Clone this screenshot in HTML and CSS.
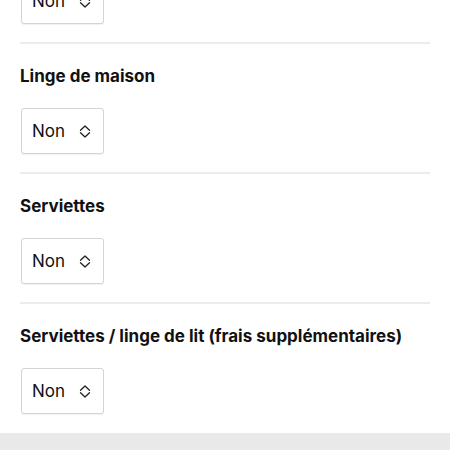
FILE: index.html
```html
<!DOCTYPE html>
<html lang="fr">
<head>
<meta charset="utf-8">
<link rel="stylesheet" href="styles.css">
</head>
<body>
<div class="page">
  <main class="content">
    <section class="field first">
      <div class="select">
        <span class="value">Non</span>
        <svg class="chev" viewBox="0 0 12 13" width="12" height="13"><path d="M1.5 5.3 L6 1 L10.5 5.3 M1.5 7.7 L6 12 L10.5 7.7" fill="none" stroke="#222" stroke-width="1.3" stroke-linecap="round" stroke-linejoin="round"/></svg>
      </div>
    </section>
    <section class="field">
      <h3 class="label">Linge de maison</h3>
      <div class="select">
        <span class="value">Non</span>
        <svg class="chev" viewBox="0 0 12 13" width="12" height="13"><path d="M1.5 5.3 L6 1 L10.5 5.3 M1.5 7.7 L6 12 L10.5 7.7" fill="none" stroke="#222" stroke-width="1.3" stroke-linecap="round" stroke-linejoin="round"/></svg>
      </div>
    </section>
    <section class="field">
      <h3 class="label">Serviettes</h3>
      <div class="select">
        <span class="value">Non</span>
        <svg class="chev" viewBox="0 0 12 13" width="12" height="13"><path d="M1.5 5.3 L6 1 L10.5 5.3 M1.5 7.7 L6 12 L10.5 7.7" fill="none" stroke="#222" stroke-width="1.3" stroke-linecap="round" stroke-linejoin="round"/></svg>
      </div>
    </section>
    <section class="field last">
      <h3 class="label">Serviettes / linge de lit (frais supplémentaires)</h3>
      <div class="select">
        <span class="value">Non</span>
        <svg class="chev" viewBox="0 0 12 13" width="12" height="13"><path d="M1.5 5.3 L6 1 L10.5 5.3 M1.5 7.7 L6 12 L10.5 7.7" fill="none" stroke="#222" stroke-width="1.3" stroke-linecap="round" stroke-linejoin="round"/></svg>
      </div>
    </section>
  </main>
  <footer class="footer"></footer>
</div>
</body>
</html>
```

FILE: styles.css
```css
html, body {
  margin: 0;
  padding: 0;
  background: #ffffff;
  overflow: hidden;
}
body {
  font-family: Inter, "Liberation Sans", Arial, sans-serif;
  color: #111;
}
.page {
  display: flex;
  flex-direction: column;
  height: 450px;
}
.content {
  margin-top: -22px;
  padding: 0 20px;
  flex: 0 0 auto;
}
.field {
  border-bottom: 2px solid #ececec;
  padding: 22px 0 18px;
}
.field.first {
  padding-top: 0;
}
.field.last {
  border-bottom: none;
  padding-bottom: 19px;
}
.label {
  margin: 0 0 22px 0;
  font-size: 17px;
  line-height: 20px;
  font-weight: 700;
  color: #111;
}
.select {
  box-sizing: border-box;
  width: 83px;
  height: 46px;
  margin-left: 1px;
  border: 1px solid #d4d4d4;
  border-radius: 3px;
  box-shadow: 0 1px 1px rgba(0,0,0,0.06);
  display: flex;
  align-items: center;
  padding: 0 0 0 10px;
  gap: 14px;
  background: #fff;
}
.value {
  font-size: 17px;
  color: #111;
}
.chev {
  display: block;
}
.footer {
  flex: 1 1 auto;
  background: #e9e9e9;
}
```
